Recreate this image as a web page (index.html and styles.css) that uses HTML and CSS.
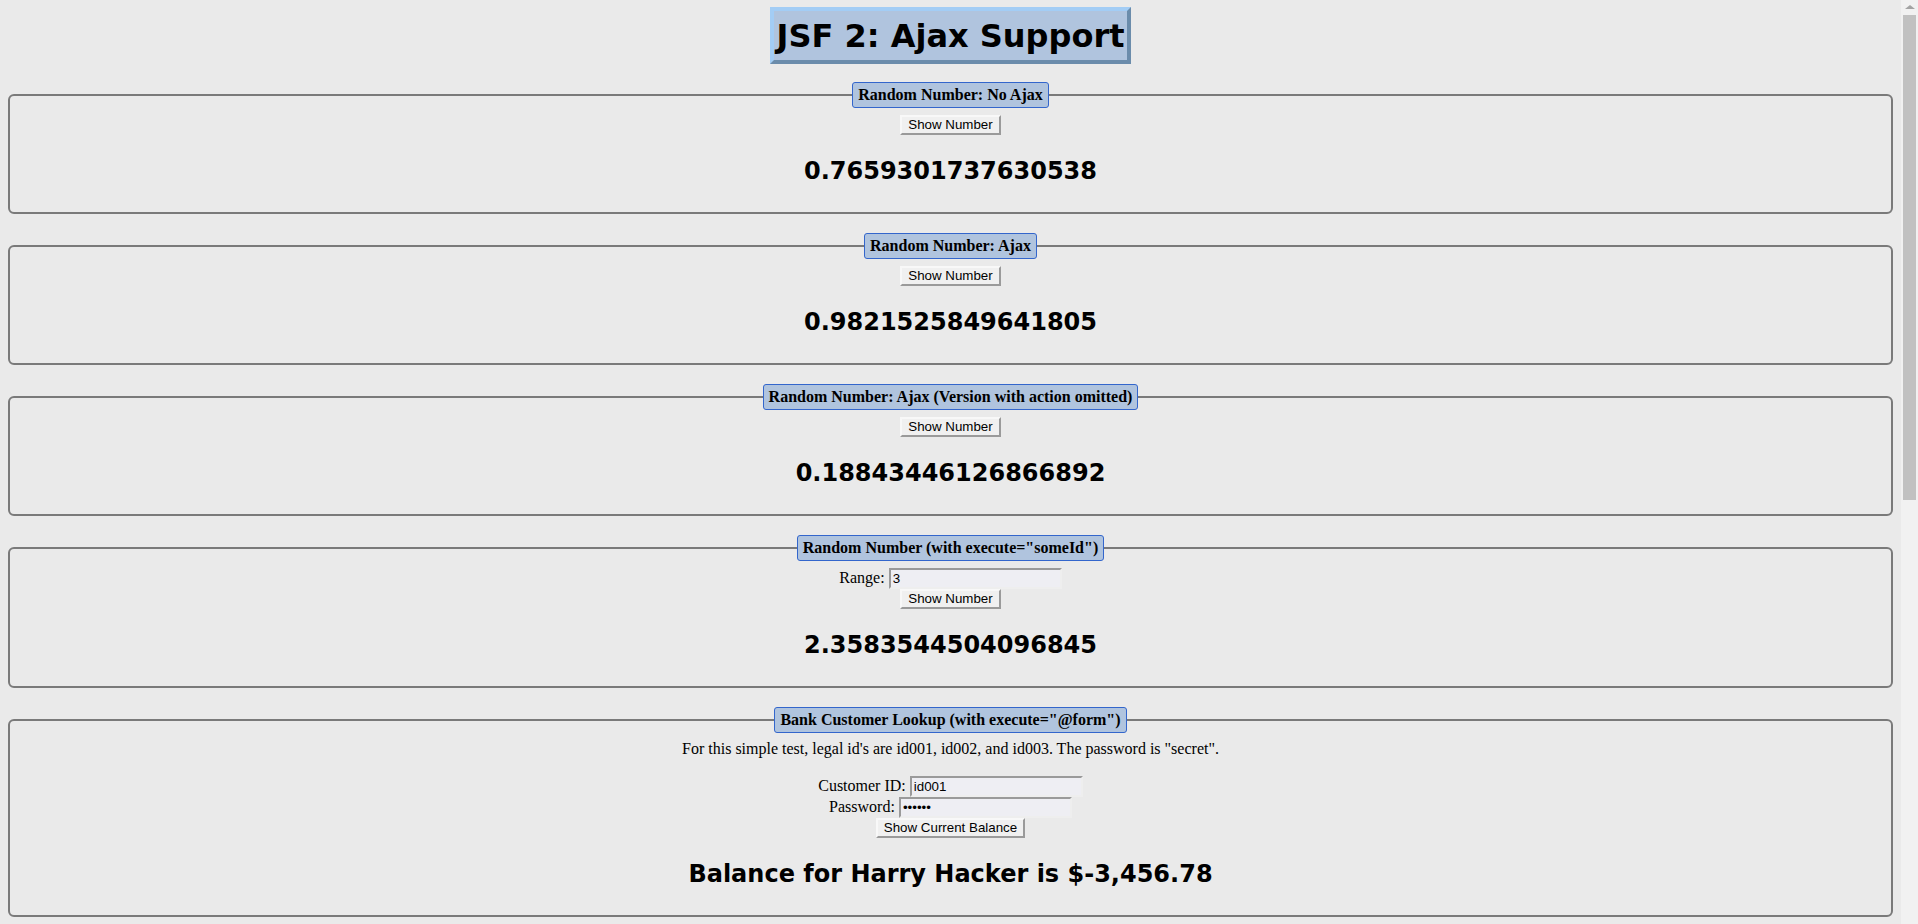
FILE: index.html
```html
<!DOCTYPE html>
<html lang="en">
<head>
<meta charset="utf-8">
<title>JSF 2: Ajax Support</title>
<link rel="stylesheet" href="styles.css">
</head>
<body class="page">
<div class="title-wrap"><h1 class="title">JSF 2: Ajax Support</h1></div>

<form class="form">
<fieldset class="box">
  <legend class="legend">Random Number: No Ajax</legend>
  <div class="row"><button type="button" class="btn">Show Number</button></div>
  <h2 class="result">0.7659301737630538</h2>
</fieldset>
</form>

<form class="form">
<fieldset class="box">
  <legend class="legend">Random Number: Ajax</legend>
  <div class="row"><button type="button" class="btn">Show Number</button></div>
  <h2 class="result">0.9821525849641805</h2>
</fieldset>
</form>

<form class="form">
<fieldset class="box">
  <legend class="legend">Random Number: Ajax (Version with action omitted)</legend>
  <div class="row"><button type="button" class="btn">Show Number</button></div>
  <h2 class="result">0.18843446126866892</h2>
</fieldset>
</form>

<form class="form">
<fieldset class="box">
  <legend class="legend">Random Number (with execute="someId")</legend>
  <div class="line">Range: <input class="field" type="text" value="3"></div>
  <div class="row"><button type="button" class="btn">Show Number</button></div>
  <h2 class="result">2.3583544504096845</h2>
</fieldset>
</form>

<form class="form">
<fieldset class="box box-last">
  <legend class="legend">Bank Customer Lookup (with execute="@form")</legend>
  <p class="note">For this simple test, legal id's are id001, id002, and id003. The password is "secret".</p>
  <div class="line">Customer ID: <input class="field" type="text" value="id001"><br>Password: <input class="field" type="password" value="secret"></div>
  <div class="row"><button type="button" class="btn">Show Current Balance</button></div>
  <h2 class="result">Balance for Harry Hacker is $-3,456.78</h2>
</fieldset>
</form>

<div class="scrollbar" aria-hidden="true">
  <div class="scroll-arrow"></div>
  <div class="scroll-thumb"></div>
</div>
</body>
</html>
```
FILE: styles.css
```css
html {
  background: #eaeaea;
}
.page {
  margin: 0;
  padding: 7px 25px 0 8px;
  background: #eaeaea;
  color: #000;
  font-family: "Liberation Serif", "Times New Roman", serif;
  font-size: 16px;
}
.title-wrap {
  display: flex;
  justify-content: center;
  margin-bottom: 18px;
}
.title {
  margin: 0;
  padding: 6px 3px 5px;
  background: #b0c4de;
  border: 4px solid;
  border-color: #a3cdf5 #6b8cab #6b8cab #a3cdf5;
  font-family: "DejaVu Sans", Verdana, sans-serif;
  font-weight: bold;
  font-size: 32px;
  line-height: 38px;
}
.form {
  margin: 0;
}
.box {
  margin: 0 0 19px;
  padding: 7px 12px 27px;
  border: 2px solid #7a7a7a;
  border-radius: 6px;
  text-align: center;
}
.box-last {
  margin-bottom: 0;
}
.legend {
  margin: 0 auto;
  padding: 3px 5px;
  background: #b0c4de;
  border: 1px solid #3366cc;
  border-radius: 3px;
  font-weight: bold;
  font-size: 16px;
  line-height: 18px;
}
.row {
  display: flex;
  justify-content: center;
}
.btn {
  margin: 0;
  padding: 0 6px 1px;
  background: #f0f0f0;
  border: 2px solid;
  border-color: #f8f8f8 #9a9a9a #9a9a9a #f8f8f8;
  border-radius: 0;
  color: #000;
  font-family: "Liberation Sans", Arial, sans-serif;
  font-size: 13.333px;
  line-height: 15px;
}
.line {
  line-height: normal;
}
.field {
  box-sizing: border-box;
  width: 173px;
  height: 21px;
  margin: 0;
  padding: 0 2px;
  background: #eeeef3;
  border: 2px solid;
  border-color: #9a9a9a #eeeeee #eeeeee #9a9a9a;
  color: #000;
  font-family: "Liberation Sans", Arial, sans-serif;
  font-size: 13.333px;
  outline: none;
}
.note {
  margin: 0 0 18px;
  line-height: normal;
}
.result {
  margin: 22px 0 0;
  font-family: "DejaVu Sans", Verdana, sans-serif;
  font-weight: bold;
  font-size: 24px;
  line-height: 28px;
}
.scrollbar {
  position: fixed;
  top: 0;
  right: 0;
  width: 17px;
  height: 100%;
  background: #f1f1f1;
}
.scroll-arrow {
  position: absolute;
  top: 5px;
  left: 4px;
  width: 0;
  height: 0;
  border-left: 5px solid transparent;
  border-right: 5px solid transparent;
  border-bottom: 4px solid #a3a3a3;
}
.scroll-thumb {
  position: absolute;
  top: 15px;
  left: 2px;
  width: 13px;
  height: 485px;
  background: #c1c1c1;
}
```
